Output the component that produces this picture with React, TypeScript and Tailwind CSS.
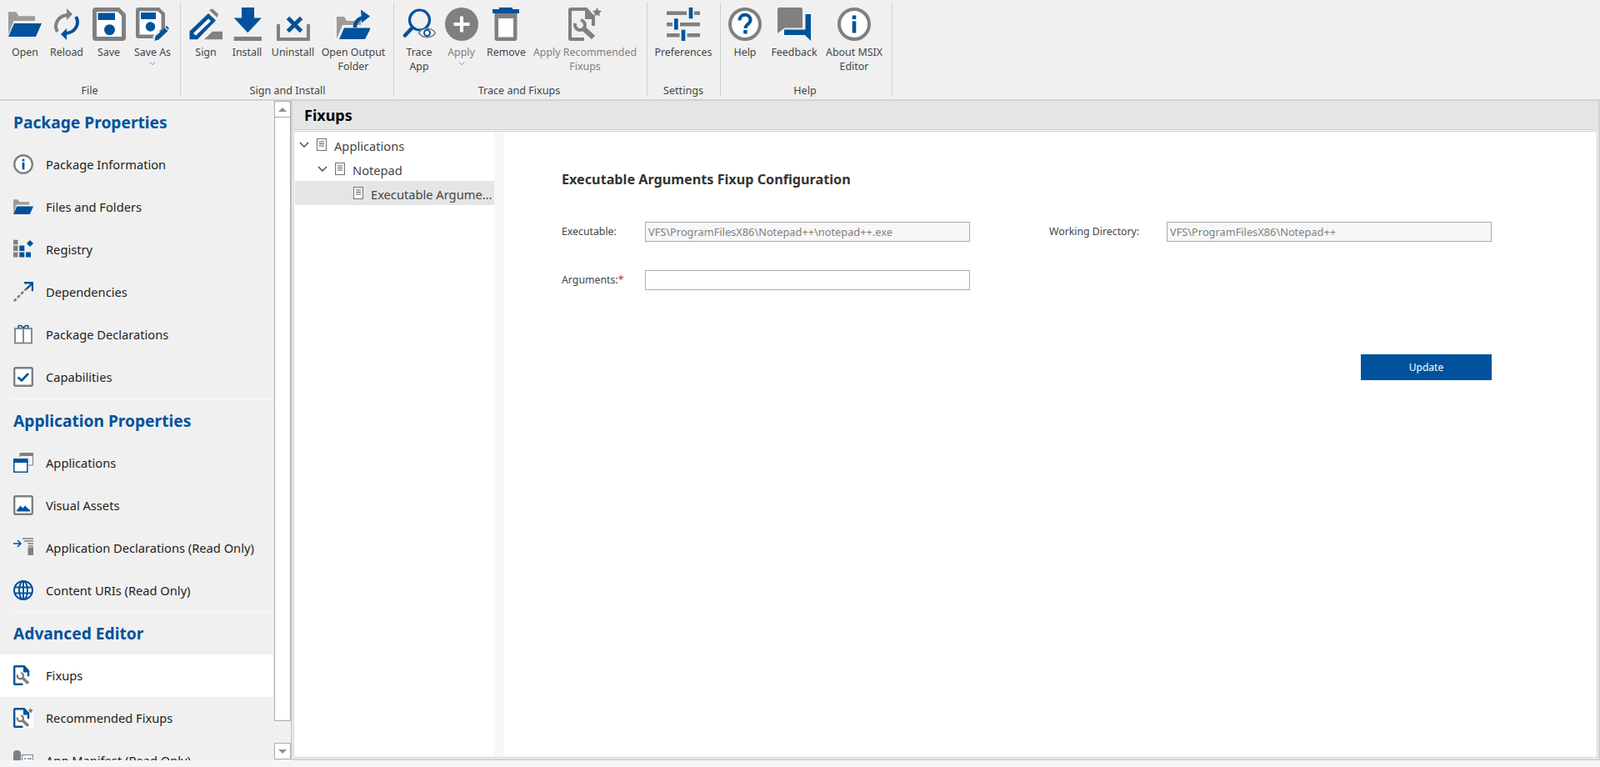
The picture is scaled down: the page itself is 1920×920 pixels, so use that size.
import React from "react";

const BLUE = "#00529c";
const GRAY = "#808080";

type IconProps = { size?: number };

// ribbon + sidebar icons, all drawn on a 40 or 24 box
const OpenIcon = ({ size = 40 }: IconProps) => (
  <svg width={size} height={size} viewBox="0 0 40 40">
    <path d="M0 5.3h9.3l3.3 5H32V16H6.6L0 32.6z" fill={GRAY} opacity="0.75" />
    <path d="M7 19h33l-7 16H0z" fill={BLUE} />
  </svg>
);

const ReloadIcon = () => (
  <svg width="40" height="40" viewBox="0 0 40 40" fill="none">
    <path d="M9 29C4 21 9 10 21 9" stroke={GRAY} strokeWidth="4" />
    <path d="M20 1l7 7-7 7z" fill={GRAY} />
    <path d="M31 11c5 8 0 19-12 20" stroke={BLUE} strokeWidth="4" />
    <path d="M20 25l-7 7 7 7z" fill={BLUE} />
  </svg>
);

const SaveIcon = () => (
  <svg width="40" height="40" viewBox="0 0 40 40">
    <path d="M4 0h28l8 8v28a4 4 0 0 1-4 4H4a4 4 0 0 1-4-4V4a4 4 0 0 1 4-4z" fill={GRAY} />
    <path d="M5 5h25l5 5v25H5z" fill="#fff" />
    <rect x="6.5" y="6.5" width="20.5" height="8.5" fill={BLUE} />
    <circle cx="20.5" cy="26.7" r="6.5" fill={BLUE} />
  </svg>
);

const SaveAsIcon = () => (
  <svg width="40" height="40" viewBox="0 0 40 40">
    <path d="M3 0h25l7 7v21l-9 9H3a3 3 0 0 1-3-3V3a3 3 0 0 1 3-3z" fill={GRAY} />
    <path d="M4.5 4.5h22l4 4v17l-7 7H4.5z" fill="#fff" />
    <rect x="6" y="6" width="18" height="8" fill={BLUE} />
    <circle cx="17.5" cy="23" r="5.7" fill={BLUE} />
    <path d="M26.5 27L20 35.5 23.5 38 30 30z" fill="#f0f0f0" />
    <path d="M34.5 24.5l4 3.5L27.500 38.5l-5 1.500 1-5.500z" fill={BLUE} />
    <path d="M35.5 23.5l1.500-1.500 3 3-1.500 1.500z" fill={BLUE} />
  </svg>
);

const SignIcon = () => (
  <svg width="40" height="40" viewBox="0 0 40 40">
    <path d="M18 38.3l10-9.600h12v9.600z" fill={GRAY} />
    <path d="M24 3l4-1.500 7 6.500-1.500 4z" fill={GRAY} />
    <path d="M0.5 28.5L23 7l9 8.500L10 38.3H0.5z" fill={BLUE} />
    <path d="M5 31L23 13.5l3 2.700L8 33.5z" fill="#fff" />
  </svg>
);

const InstallIcon = () => (
  <svg width="40" height="40" viewBox="0 0 40 40">
    <path d="M13 0h15v12.6h9L20.3 30.3 3.7 12.6H13z" fill={BLUE} />
    <rect x="3.7" y="35" width="33.3" height="5" fill={GRAY} />
  </svg>
);

const UninstallIcon = () => (
  <svg width="40" height="40" viewBox="0 0 40 40" fill="none">
    <path d="M2 20v18h36V20" stroke={GRAY} strokeWidth="4" />
    <path d="M13.5 13.5l16 16M29.5 13.5l-16 16" stroke={BLUE} strokeWidth="5" transform="translate(0 -1)" />
  </svg>
);

const OutputFolderIcon = () => (
  <svg width="40" height="40" viewBox="0 0 40 40">
    <path d="M0 11h9l3 5h17v5H7L0 38z" fill={GRAY} opacity="0.75" />
    <path d="M8 23h33l-7 15H3z" fill="#f0f0f0" />
    <path d="M9 24.5h32l-7 13.500H3z" fill={BLUE} />
    <path d="M22 24c0-8 6-12 12-12" stroke={BLUE} strokeWidth="4.5" fill="none" />
    <path d="M29 2.5l11 8-10 8z" fill={BLUE} />
  </svg>
);

const TraceIcon = () => (
  <svg width="40" height="40" viewBox="0 0 40 40" fill="none">
    <circle cx="20.5" cy="15" r="12" stroke={BLUE} strokeWidth="3.2" />
    <path d="M11.5 24.5L3 33.5" stroke={BLUE} strokeWidth="4.5" strokeLinecap="round" />
    <path d="M19.5 30.5c5-7 15-7 20 0-5 7-15 7-20 0z" fill="#fff" stroke={GRAY} strokeWidth="1.6" />
    <circle cx="29.5" cy="30.5" r="3.5" stroke={BLUE} strokeWidth="2" />
  </svg>
);

const ApplyIcon = () => (
  <svg width="40" height="40" viewBox="0 0 40 40">
    <circle cx="20" cy="20" r="20" fill={GRAY} />
    <path d="M18 10.5h4V18h7.500v4H22v7.500h-4V22h-7.500v-4H18z" fill="#fff" />
  </svg>
);

const RemoveIcon = () => (
  <svg width="40" height="40" viewBox="0 0 40 40">
    <rect x="11" y="0" width="16" height="3" fill={BLUE} />
    <rect x="3" y="2" width="32" height="5" fill={BLUE} />
    <path d="M5.5 7h27v30a3 3 0 0 1-3 3h-21a3 3 0 0 1-3-3z" fill={GRAY} />
    <rect x="10" y="13" width="18" height="22.5" fill="#fff" />
  </svg>
);

const WrenchDoc = ({ color, size = 40, star, backed }: { color: string; size?: number; star?: boolean; backed?: boolean }) => (
  <svg width={size} height={size} viewBox="0 0 40 40" fill="none">
    {backed && <rect width="40" height="40" fill="#fff" />}
    <path d="M3 0h19l10 11v11h-4V14h-8V4H4v32h15v4H3a3 3 0 0 1-3-3V3a3 3 0 0 1 3-3z" fill={color} />
    <path d="M22 0l10 11H22z" fill={color} />
    <path d="M8.3 19A6 6 0 1 0 15 15.100" stroke={GRAY} strokeWidth="4" />
    <path d="M18 25L30 36" stroke={GRAY} strokeWidth="6" />
    {star && <path d="M34.500 0l1.700 3.400 3.800.600-2.700 2.700.600 3.800-3.400-1.800-3.400 1.800.600-3.800L29 4l3.800-.600z" fill={GRAY} />}
  </svg>
);

const SlidersIcon = () => (
  <svg width="40" height="40" viewBox="0 0 40 40">
    <rect x="0" y="4.5" width="40" height="4.5" fill={GRAY} />
    <rect x="0" y="18" width="40" height="4.5" fill={GRAY} />
    <rect x="0" y="31" width="40" height="4.5" fill={GRAY} />
    <rect x="24" y="0" width="9" height="13.3" fill="#f0f0f0" />
    <rect x="7" y="13.3" width="9" height="13.3" fill="#f0f0f0" />
    <rect x="15.5" y="26.7" width="9" height="13.3" fill="#f0f0f0" />
    <rect x="26.7" y="0" width="4.6" height="13.3" fill={BLUE} />
    <rect x="9" y="13.3" width="4.7" height="13.3" fill={BLUE} />
    <rect x="17.7" y="26.7" width="4.6" height="13.3" fill={BLUE} />
  </svg>
);

const HelpIcon = () => (
  <svg width="40" height="40" viewBox="0 0 40 40" fill="none">
    <circle cx="20" cy="20" r="18" fill="#fff" stroke={GRAY} strokeWidth="4" />
    <path d="M13.5 15.5c0-9 13-9 13-.5 0 5-6 5-6 10" stroke={BLUE} strokeWidth="4" />
    <rect x="18.2" y="27" width="4.5" height="4.5" fill={BLUE} />
  </svg>
);

const FeedbackIcon = () => (
  <svg width="40" height="40" viewBox="0 0 40 40">
    <path d="M2 0h26a2 2 0 0 1 2 2v22.500H8.500L0 31V2a2 2 0 0 1 2-2z" fill={GRAY} />
    <path d="M33.5 8H40v32l-7-7H8v-6.500h25.500z" fill={BLUE} />
  </svg>
);

const AboutIcon = ({ size = 40 }: IconProps) => (
  <svg width={size} height={size} viewBox="0 0 40 40" fill="none">
    <circle cx="20" cy="20" r="18" fill="#fff" stroke={GRAY} strokeWidth="4" />
    <rect x="17.7" y="9.5" width="4.6" height="4.6" fill={BLUE} />
    <rect x="17.7" y="16.5" width="4.6" height="14" fill={BLUE} />
  </svg>
);

const RegistryIcon = () => (
  <svg width="24" height="24" viewBox="0 0 24 24">
    <rect x="0" y="0.7" width="5.5" height="5.6" fill={GRAY} />
    <rect x="0" y="7.5" width="5.5" height="6.5" fill={GRAY} />
    <rect x="7.3" y="7.5" width="6" height="6.5" fill={BLUE} />
    <rect x="0" y="15.5" width="5.5" height="6" fill={GRAY} />
    <rect x="7.3" y="15.5" width="6" height="6" fill={BLUE} />
    <rect x="15" y="15.5" width="6" height="6" fill={BLUE} />
    <path d="M20 1l4 4-4 4-4-4z" fill={BLUE} />
  </svg>
);

const DependenciesIcon = () => (
  <svg width="24" height="24" viewBox="0 0 24 24" fill="none">
    <path d="M0.8 23.200L16 8" stroke={GRAY} strokeWidth="2.6" strokeDasharray="4 2" />
    <path d="M13 1.200h10v10" stroke={BLUE} strokeWidth="2.400" />
    <path d="M22.500 2L16 8.500" stroke={BLUE} strokeWidth="2.400" />
  </svg>
);

const GiftIcon = () => (
  <svg width="24" height="24" viewBox="0 0 24 24" fill="none">
    <rect x="2" y="5" width="20" height="17.500" fill="#fff" stroke={GRAY} strokeWidth="1.800" />
    <path d="M12 5v17.500" stroke={GRAY} strokeWidth="1.800" />
    <path d="M12 4.500C9 -0.500 3.500 1.500 7 4.500M12 4.500C15 -0.500 20.500 1.500 17 4.500" stroke={BLUE} strokeWidth="1.500" />
  </svg>
);

const CheckBoxIcon = () => (
  <svg width="24" height="24" viewBox="0 0 24 24" fill="none">
    <rect x="1.200" y="1.200" width="21.600" height="21.600" rx="1.500" fill="#fff" stroke={GRAY} strokeWidth="2.400" />
    <path d="M5.500 12.500l4.500 4 8-8.500" stroke={BLUE} strokeWidth="2.600" />
  </svg>
);

const WindowsIcon = () => (
  <svg width="24" height="24" viewBox="0 0 24 24" fill="none">
    <path d="M8 5V0.500h15.500V15H18" stroke={GRAY} strokeWidth="1" />
    <rect x="8" y="0" width="16" height="4" fill={GRAY} />
    <rect x="0.800" y="9.800" width="16" height="13.400" fill="#fff" stroke={BLUE} strokeWidth="1.500" />
    <rect x="0" y="7" width="17.500" height="5" fill={BLUE} />
  </svg>
);

const PictureIcon = () => (
  <svg width="24" height="24" viewBox="0 0 24 24" fill="none">
    <rect x="1.200" y="1.200" width="21.600" height="21.600" rx="1.500" fill="#fff" stroke={GRAY} strokeWidth="2.400" />
    <path d="M4 18.500l4.500-6 3 3 2.500-3 6 6z" fill={BLUE} />
    <rect x="4" y="17.500" width="16" height="2" fill={BLUE} />
  </svg>
);

const DeclarationsIcon = () => (
  <svg width="24" height="24" viewBox="0 0 24 24" fill="none">
    <path d="M0 7h8M5 3l4 4-4 4" stroke={BLUE} strokeWidth="1.500" />
    <path d="M11 1h13M13 4h11M17 7h7M18 10h6" stroke={GRAY} strokeWidth="1.500" />
    <rect x="17.500" y="11.500" width="6.500" height="9.500" fill={GRAY} />
  </svg>
);

const GlobeIcon = () => (
  <svg width="24" height="24" viewBox="0 0 24 24" fill="none">
    <circle cx="12" cy="12" r="11" stroke={BLUE} strokeWidth="2" fill="#fff" />
    <ellipse cx="12" cy="12" rx="5" ry="11" stroke={BLUE} strokeWidth="2" />
    <path d="M12 1v22M1.500 8.500h21M1.500 15.500h21" stroke={BLUE} strokeWidth="2" />
  </svg>
);

const ManifestIcon = () => (
  <svg width="24" height="24" viewBox="0 0 24 24" fill="none">
    <rect x="0" y="0" width="9" height="24" rx="4" fill={GRAY} />
    <rect x="10.500" y="5.500" width="13" height="18" fill="#fff" stroke={GRAY} />
    <path d="M13 10h2M17 10h5" stroke={BLUE} strokeWidth="1.200" />
  </svg>
);

const DocIcon = () => (
  <svg width="12" height="15" viewBox="0 0 12 15" fill="none" className="shrink-0">
    <rect x="0.500" y="0.500" width="11" height="14" fill="#fff" stroke="#707070" />
    <path d="M3 4h6M3 6.500h6M3 9h6" stroke="#555" />
  </svg>
);

const Chevron = ({ className }: { className: string }) => (
  <svg width="12" height="8" viewBox="0 0 12 8" fill="none" className={className}>
    <path d="M1 1l5 5 5-5" stroke="currentColor" strokeWidth="1.400" />
  </svg>
);

type RibbonButton = { label: string[]; width: string; icon: React.ReactNode; disabled?: boolean; menu?: boolean };
type RibbonGroup = { title: string; width: string; pad: string; buttons: RibbonButton[] };

const groups: RibbonGroup[] = [
  {
    title: "File",
    width: "w-[216px]",
    pad: "pl-[5px] pr-[6px]",
    buttons: [
      { label: ["Open"], width: "w-[50px]", icon: <OpenIcon /> },
      { label: ["Reload"], width: "w-[50px]", icon: <ReloadIcon /> },
      { label: ["Save"], width: "w-[51px]", icon: <SaveIcon /> },
      { label: ["Save As"], width: "w-[54px]", icon: <SaveAsIcon />, menu: true },
    ],
  },
  {
    title: "Sign and Install",
    width: "w-[255px]",
    pad: "pl-[6px] pr-[5px]",
    buttons: [
      { label: ["Sign"], width: "w-[48px]", icon: <SignIcon /> },
      { label: ["Install"], width: "w-[51px]", icon: <InstallIcon /> },
      { label: ["Uninstall"], width: "w-[59px]", icon: <UninstallIcon /> },
      { label: ["Open Output", "Folder"], width: "w-[86px]", icon: <OutputFolderIcon /> },
    ],
  },
  {
    title: "Trace and Fixups",
    width: "w-[303px]",
    pad: "pl-[5px] pr-[8px]",
    buttons: [
      { label: ["Trace", "App"], width: "w-[50px]", icon: <TraceIcon /> },
      { label: ["Apply"], width: "w-[51px]", icon: <ApplyIcon />, disabled: true, menu: true },
      { label: ["Remove"], width: "w-[57px]", icon: <RemoveIcon /> },
      { label: ["Apply Recommended", "Fixups"], width: "w-[132px]", icon: <WrenchDoc color={GRAY} star />, disabled: true },
    ],
  },
  {
    title: "Settings",
    width: "w-[87px]",
    pad: "pl-[3px] pr-[4px]",
    buttons: [{ label: ["Preferences"], width: "w-[80px]", icon: <SlidersIcon /> }],
  },
  {
    title: "Help",
    width: "w-[205px]",
    pad: "pl-[2px] pr-[5px]",
    buttons: [
      { label: ["Help"], width: "w-[54px]", icon: <HelpIcon /> },
      { label: ["Feedback"], width: "w-[64px]", icon: <FeedbackIcon /> },
      { label: ["About MSIX", "Editor"], width: "w-[80px]", icon: <AboutIcon /> },
    ],
  },
];

type NavItem = { label: string; icon: React.ReactNode; active?: boolean };
type NavSection = { title: string; items: NavItem[] };

const sections: NavSection[] = [
  {
    title: "Package Properties",
    items: [
      { label: "Package Information", icon: <AboutIcon size={24} /> },
      { label: "Files and Folders", icon: <OpenIcon size={24} /> },
      { label: "Registry", icon: <RegistryIcon /> },
      { label: "Dependencies", icon: <DependenciesIcon /> },
      { label: "Package Declarations", icon: <GiftIcon /> },
      { label: "Capabilities", icon: <CheckBoxIcon /> },
    ],
  },
  {
    title: "Application Properties",
    items: [
      { label: "Applications", icon: <WindowsIcon /> },
      { label: "Visual Assets", icon: <PictureIcon /> },
      { label: "Application Declarations (Read Only)", icon: <DeclarationsIcon /> },
      { label: "Content URIs (Read Only)", icon: <GlobeIcon /> },
    ],
  },
  {
    title: "Advanced Editor",
    items: [
      { label: "Fixups", icon: <WrenchDoc color={BLUE} size={24} />, active: true },
      { label: "Recommended Fixups", icon: <WrenchDoc color={BLUE} size={24} star backed /> },
      { label: "App Manifest (Read Only)", icon: <ManifestIcon /> },
    ],
  },
];

const Ribbon = () => (
  <div className="flex h-[121px] shrink-0 border-b-2 border-[#d2d2d2] bg-[#f0f0f0]">
    {groups.map((group) => (
      <React.Fragment key={group.title}>
        <div className={`${group.width} flex h-[119px] flex-col ${group.pad}`}>
          <div className="flex flex-1 pt-[9px]">
            {group.buttons.map((btn) => (
              <div
                key={btn.label[0]}
                className={`${btn.width} flex flex-col items-center text-[12.4px] leading-[17px] ${btn.disabled ? "text-[#808080]" : "text-[#444]"}`}
              >
                <div className="mb-[5px] h-[40px] w-[40px]">{btn.icon}</div>
                {btn.label.map((line) => (
                  <span key={line} className="whitespace-nowrap">
                    {line}
                  </span>
                ))}
                {btn.menu && <Chevron className="mt-[3px] h-[5px] w-[8px] text-[#808080]" />}
              </div>
            ))}
          </div>
          <div className="h-[20px] text-center text-[12.6px] leading-[20px] text-[#444]">{group.title}</div>
        </div>
        <div className="mt-[3px] h-[112px] w-px bg-[#d0d0d0]" />
      </React.Fragment>
    ))}
  </div>
);

const Sidebar = () => (
  <div className="w-[328px] shrink-0 overflow-hidden">
    {sections.map((section, i) => (
      <div key={section.title}>
        <div className="flex h-[51px] items-center pl-4 pt-[2px] text-[19.2px] font-bold text-[#00529c]">{section.title}</div>
        {section.items.map((item) => (
          <div
            key={item.label}
            className={`flex h-[51px] items-center pb-[2px] pl-4 text-[14.67px] text-[#222] ${item.active ? "bg-white" : ""}`}
          >
            <div className="mr-[15px] flex h-[24px] w-[24px] items-center justify-center">{item.icon}</div>
            {item.label}
          </div>
        ))}
        {i < sections.length - 1 && <div className={`ml-3 border-t border-[#fafafa] ${i === 0 ? "" : "-mt-px"}`} />}
      </div>
    ))}
  </div>
);

const ScrollBar = () => (
  <div className="ml-px flex w-[20px] shrink-0 flex-col pb-px">
    <div className="flex h-[20px] items-center justify-center border border-[#ababab] bg-white">
      <div className="h-0 w-0 border-x-[5px] border-b-[5px] border-x-transparent border-b-[#909090]" />
    </div>
    <div className="h-[724px] border-x border-b border-[#ababab] bg-white" />
    <div className="flex-1" />
    <div className="flex h-[20px] items-center justify-center border border-[#ababab] bg-white">
      <div className="h-0 w-0 border-x-[5px] border-t-[5px] border-x-transparent border-t-[#909090]" />
    </div>
  </div>
);

const Field = ({ value, labelWidth, children }: { value: string; labelWidth: string; children: React.ReactNode }) => (
  <div className="flex items-center">
    <div className={`${labelWidth} text-[12.3px] text-[#444]`}>{children}</div>
    <div
      className={`h-[24px] w-[390px] border border-[#ababab] pl-[3px] text-[12.8px] leading-[22px] text-[#808080] ${value ? "bg-[#f7f7f7]" : "bg-white"}`}
    >
      {value}
    </div>
  </div>
);

const FixupForm = () => (
  <div className="flex-1 pl-[69px] pt-[46px]">
    <div className="text-[16.2px] font-bold leading-[22px] text-[#333]">Executable Arguments Fixup Configuration</div>
    <div className="mt-[40px] flex">
      <Field labelWidth="w-[100px]" value="VFS\ProgramFilesX86\Notepad++\notepad++.exe">
        Executable:
      </Field>
      <div className="ml-[95px]">
        <Field labelWidth="w-[141px]" value="VFS\ProgramFilesX86\Notepad++">
          Working Directory:
        </Field>
      </div>
    </div>
    <div className="mt-[34px]">
      <Field labelWidth="w-[100px]" value="">
        Arguments:<span className="text-[#e02020]">*</span>
      </Field>
    </div>
    <div className="mt-[77px] flex w-[1116px] justify-end">
      <div className="flex h-[31px] w-[157px] items-center justify-center bg-[#00529c] text-[12px] text-white">Update</div>
    </div>
  </div>
);

const Tree = () => (
  <div className="flex shrink-0">
    <div className="w-[239px] pt-px text-[14.67px] text-[#444]">
      <div className="flex h-[29px] items-center pl-[5px]">
        <Chevron className="mr-[9px] shrink-0" />
        <DocIcon />
        <span className="ml-[9px] mt-[2px]">Applications</span>
      </div>
      <div className="flex h-[29px] items-center pl-[27px]">
        <Chevron className="mr-[9px] shrink-0" />
        <DocIcon />
        <span className="ml-[9px] mt-[2px]">Notepad</span>
      </div>
      <div className="flex h-[29px] items-center bg-[#e5e5e5] pl-[70px]">
        <DocIcon />
        <span className="ml-[9px] mt-[2px] whitespace-nowrap">Executable Argume...</span>
      </div>
    </div>
    <div className="w-[12px] bg-[#f7f7f7]" />
  </div>
);

const App = () => {
  return (
    <div className="flex h-[920px] w-[1920px] flex-col overflow-hidden bg-[#f5f5f5] font-['Open_Sans',sans-serif]">
      <Ribbon />
      <div className="flex h-[791px] shrink-0 bg-[#f0f0f0]">
        <Sidebar />
        <ScrollBar />
        <div className="flex min-w-0 flex-1 flex-col border-x-2 border-b-2 border-[#d2d2d2]">
          <div className="flex h-[35px] shrink-0 items-center border-b border-[#d2d2d2] bg-[#e5e5e5] pl-[14px] text-[18px] font-bold text-black">
            Fixups
          </div>
          <div className="flex flex-1 bg-[#f8f8f8] p-px">
            <div className="flex flex-1 border border-[#d2d2d2] bg-white pl-px">
              <Tree />
              <FixupForm />
            </div>
          </div>
        </div>
      </div>
    </div>
  );
};

export default App;
